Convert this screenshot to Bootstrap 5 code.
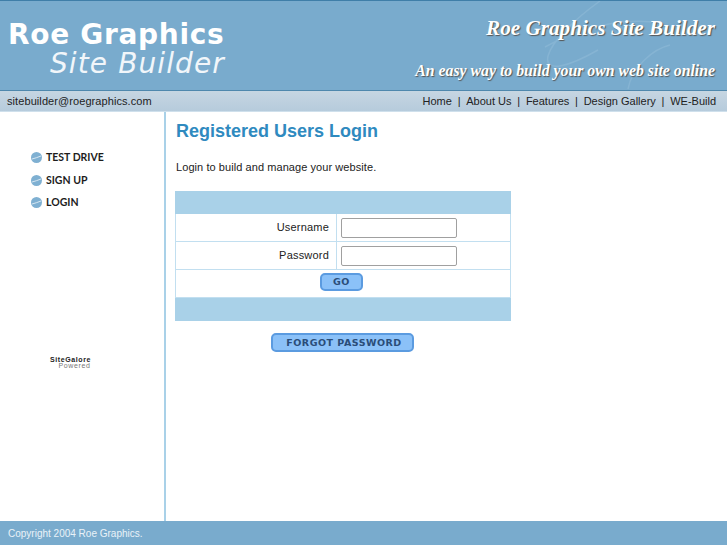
<!DOCTYPE html>
<html lang="en">
<head>
<meta charset="utf-8">
<title>Roe Graphics Site Builder</title>
<link href="https://cdn.jsdelivr.net/npm/bootstrap@5.3.0/dist/css/bootstrap.min.css" rel="stylesheet">
<style>
html,body{height:100%;overflow:hidden}
body{font-family:"Liberation Sans",Arial,sans-serif;font-size:11px;color:#222;background:#fff}
.shell{height:545px;width:727px}
.mast{height:91px;background:#79abcd;border-top:1px solid #3f7ea8;border-bottom:1px solid #4f88ad;position:relative;flex:none}
.wm{position:absolute;left:510px;top:0;width:217px;height:89px}
.logo-a{font-family:"DejaVu Sans",sans-serif;font-weight:700;font-size:28px;letter-spacing:.7px;line-height:28px;color:#fff;padding-left:8px;margin-top:20px}
.logo-b{font-family:"DejaVu Sans",sans-serif;font-style:italic;font-size:28px;letter-spacing:1.1px;line-height:28px;color:#f1f6fa;padding-left:50px;margin-top:1px}
.tag-a,.tag-b{font-family:"Liberation Serif",serif;font-style:italic;font-weight:700;color:#fff;text-shadow:1px 1px 1px #555;text-align:right;padding-right:12px;position:relative}
.tag-a{font-size:21.2px;line-height:26px;margin-top:14px}
.tag-b{font-size:15.8px;line-height:22px;margin-top:19px}
.subbar{height:21px;background:linear-gradient(#c6d6e2,#b6cbdc);flex:none;border-bottom:1px solid #cfe0ec;padding:0 11px 0 7px;font-size:11px;line-height:20px;color:#222}
.subbar .mail{letter-spacing:.08px}
.subbar a{color:#222;text-decoration:none}
.subbar i{font-style:normal;margin:0 5.75px}
.side{width:166px;border-right:2px solid #a9d1e8;flex:none;padding-top:34.5px;padding-left:31px}
.menu-row{height:22.5px;font-family:Lato,sans-serif;font-weight:700;font-size:10.5px;line-height:19px;color:#1d1d1d;gap:4px}
.menu-row svg{flex:none}
.badge-box{margin:143px 0 0 18px;width:43px;text-align:center;font-size:7px;line-height:6px;font-weight:700;color:#222;letter-spacing:.6px;white-space:nowrap}
.badge-box span{display:block;color:#777;font-weight:400;padding-left:8px}
.main{padding:7px 0 0 9px;min-width:0}
.page-title{font-size:18px;font-weight:700;line-height:24px;color:#2f8abf;margin:0 0 0 1px}
.intro{font-size:11px;line-height:16px;margin:16px 0 16px 1px;letter-spacing:.07px}
.login{width:336px;border:1px solid #a9d1e8;border-collapse:collapse;font-size:11px}
.login td{border:1px solid #c2dff0;padding:0;height:28px;vertical-align:middle}
.login td.band{background:#a9d1e8;height:23px;border-color:#a9d1e8}
.login tr:first-child td.band{height:22px}
.login td.lab{width:161px;text-align:right;padding-right:7px;letter-spacing:.2px}
.login td.fld{padding-left:4px}
.login input{display:block;width:116px;height:20px;border:1px solid #a0a0a0;border-radius:2px;background:#fff;padding:0}
.pill{display:inline-block;background:#8bc1f8;border:2px solid #5b9be0;border-radius:5px;color:#2a4d78;font-family:"DejaVu Sans",sans-serif;font-weight:700;padding:0;text-align:center;line-height:14px;font-size:9.5px;letter-spacing:.5px}
.pill-go{width:43px;height:18px;display:block;margin:-4px 0 0 144px}
.forgot{width:335px;text-align:center;margin-top:12px}
.pill-forgot{width:143px;height:19px;padding-left:3px}
.foot{height:24px;background:#79abcd;color:#e9f2f8;font-size:10px;line-height:25px;padding-left:8px;flex:none}
</style>
</head>
<body>
<div class="shell d-flex flex-column">
  <header class="mast d-flex justify-content-between">
    <svg class="wm" viewBox="0 0 217 89" fill="none" stroke="#86b4d3" stroke-width="1.5"><path d="M90 0C65 18 42 40 38 55c-4 18 22 10 50-6M150 22c-35-6-80 4-115 24M118 88c4-22 25-40 42-44"/></svg>
    <div>
      <div class="logo-a">Roe Graphics</div>
      <div class="logo-b">Site Builder</div>
    </div>
    <div>
      <div class="tag-a">Roe Graphics Site Builder</div>
      <div class="tag-b">An easy way to build your own web site online</div>
    </div>
  </header>
  <div class="subbar d-flex justify-content-between">
    <span class="mail">sitebuilder@roegraphics.com</span>
    <span><a href="#">Home</a><i>|</i><a href="#">About Us</a><i>|</i><a href="#">Features</a><i>|</i><a href="#">Design Gallery</a><i>|</i><a href="#">WE-Build</a></span>
  </div>
  <div class="d-flex flex-grow-1 overflow-hidden">
    <aside class="side">
      <div class="menu-row d-flex align-items-center"><svg width="11" height="11" viewBox="0 0 11 11"><circle cx="5.5" cy="5.5" r="5.5" fill="#7fb0d2"/><path d="M1 7q4-1 9-3" stroke="#d7e7f2" fill="none"/></svg>TEST DRIVE</div>
      <div class="menu-row d-flex align-items-center"><svg width="11" height="11" viewBox="0 0 11 11"><circle cx="5.5" cy="5.5" r="5.5" fill="#7fb0d2"/><path d="M1 7q4-1 9-3" stroke="#d7e7f2" fill="none"/></svg>SIGN UP</div>
      <div class="menu-row d-flex align-items-center"><svg width="11" height="11" viewBox="0 0 11 11"><circle cx="5.5" cy="5.5" r="5.5" fill="#7fb0d2"/><path d="M1 7q4-1 9-3" stroke="#d7e7f2" fill="none"/></svg>LOGIN</div>
      <div class="badge-box">SiteGalore<span>Powered</span></div>
    </aside>
    <main class="main flex-grow-1">
      <h1 class="page-title">Registered Users Login</h1>
      <p class="intro">Login to build and manage your website.</p>
      <table class="login">
        <tr><td class="band" colspan="2"></td></tr>
        <tr><td class="lab">Username</td><td class="fld"><input type="text" aria-label="Username"></td></tr>
        <tr><td class="lab">Password</td><td class="fld"><input type="password" aria-label="Password"></td></tr>
        <tr><td colspan="2"><button class="pill pill-go" type="button">GO</button></td></tr>
        <tr><td class="band" colspan="2"></td></tr>
      </table>
      <div class="forgot"><button class="pill pill-forgot" type="button">FORGOT PASSWORD</button></div>
    </main>
  </div>
  <footer class="foot">Copyright 2004 Roe Graphics.</footer>
</div>
</body>
</html>
